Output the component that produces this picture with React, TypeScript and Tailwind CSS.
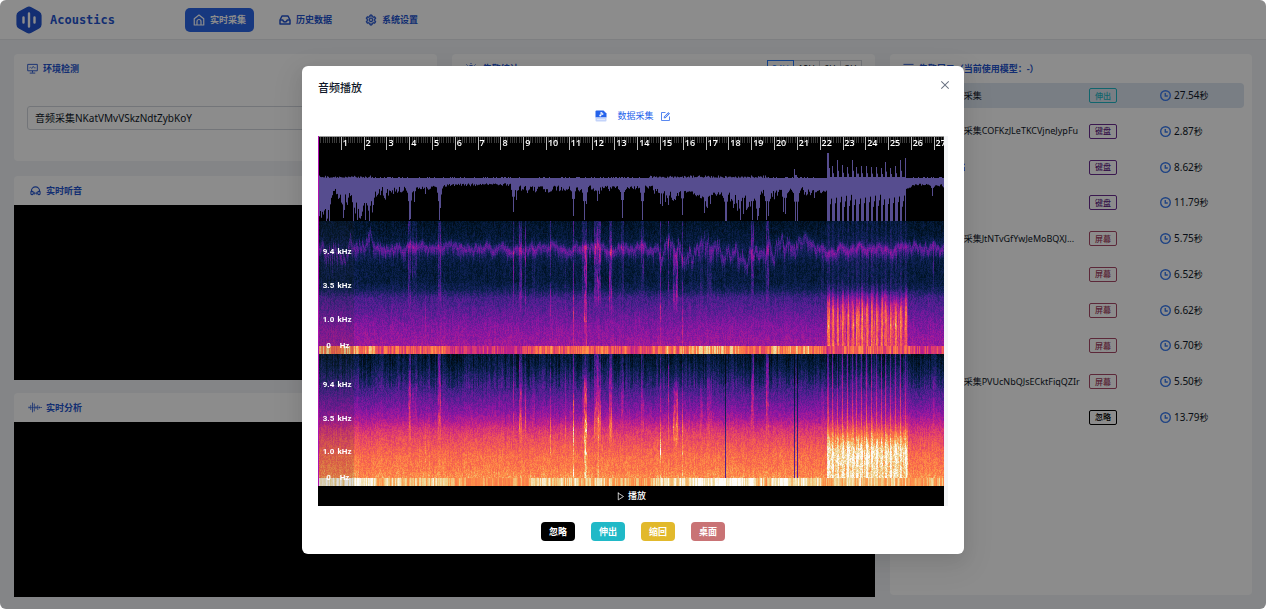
import { useEffect, useRef, useState } from "react";
import { AiOutlineClose, AiOutlineForm, AiOutlineSetting } from "react-icons/ai";
import { LuPlay } from "react-icons/lu";

type IconProps = { className?: string };

const LogoIcon = ({ className }: IconProps) => (
  <svg viewBox="0 0 26 28" className={className}>
    <path
      d="M10.6 1.2a5 5 0 0 1 4.8 0l7.8 4.2A4.6 4.6 0 0 1 25.6 9.500v9a4.600 4.600 0 0 1-2.400 4.100l-7.800 4.200a5 5 0 0 1-4.800 0l-7.800-4.200A4.600 4.600 0 0 1 .4 18.500v-9A4.600 4.600 0 0 1 2.800 5.400z"
      fill="#2354cf"
    />
    <path
      d="M7.500 11.500v5M13 7.500v13M18.500 11.500v5"
      stroke="#fff"
      strokeWidth="2.400"
      strokeLinecap="round"
    />
  </svg>
);

const HomeIcon = ({ className }: IconProps) => (
  <svg viewBox="0 0 24 24" className={className} fill="none" stroke="currentColor" strokeWidth="2.400" strokeLinejoin="round">
    <path d="M2.500 9.500 12 2l9.500 7.500V22h-19z" />
    <path d="M8 22v-7a4 4 0 0 1 8 0v7" />
  </svg>
);

const TrayIcon = ({ className }: IconProps) => (
  <svg viewBox="0 0 24 24" className={className} fill="none" stroke="currentColor" strokeWidth="3" strokeLinejoin="round">
    <path d="M6 4h12l4 8v8H2v-8z" />
    <path d="M2 12h5.500c.5 2.500 2 4 4.500 4s4-1.500 4.500-4H22" />
  </svg>
);

const GearIcon = ({ className }: IconProps) => <AiOutlineSetting className={className} strokeWidth={45} />;

const MonitorIcon = ({ className }: IconProps) => (
  <svg viewBox="0 0 24 24" className={className} fill="none" stroke="currentColor" strokeWidth="2">
    <path d="M1.500 3h21v14h-21zM12 17v4M6 22h12" />
    <path d="m5 11 3-1.500L11 12l2.500-5 2 3.500H19" strokeWidth="1.400" />
  </svg>
);

const HeadphoneIcon = ({ className }: IconProps) => (
  <svg viewBox="0 0 24 24" className={className} fill="none" stroke="currentColor" strokeWidth="2.400">
    <path d="M3 15v-2a9 9 0 0 1 18 0v2" />
    <rect x="2" y="14" width="5" height="7" rx="2" />
    <rect x="17" y="14" width="5" height="7" rx="2" />
    <path d="M10 15v6M14 15v6M7 18h10" strokeWidth="1.500" />
  </svg>
);

const WaveIcon = ({ className }: IconProps) => (
  <svg viewBox="0 0 28 22" className={className} fill="none" stroke="currentColor" strokeWidth="1.600" strokeLinecap="round">
    <path d="M2 10v2M5.500 7v8M9 2v18M12.500 4v14M16 9v4M19.500 7v8M23 10v2M26.500 11h.1" />
    <path d="M2 11h25" strokeWidth="1" />
  </svg>
);

const AlarmIcon = ({ className }: IconProps) => (
  <svg viewBox="0 0 24 24" className={className} fill="none" stroke="currentColor" strokeWidth="2">
    <path d="M6 19v-8a6 6 0 0 1 12 0v8z" fill="currentColor" fillOpacity="0.7" />
    <path d="M3 22h18M12 0v2M3 3l2 2M21 3l-2 2" />
  </svg>
);

const ListIcon = ({ className }: IconProps) => (
  <svg viewBox="0 0 24 24" className={className} fill="none" stroke="currentColor" strokeWidth="2">
    <path d="M1 3h22M1 12h6M1 21h22M11 9h12v7H11z" />
  </svg>
);

const ClockIcon = ({ className }: IconProps) => (
  <svg viewBox="0 0 24 24" className={className} fill="none" stroke="currentColor" strokeWidth="3">
    <circle cx="12" cy="12" r="10.500" />
    <path d="M11.500 6.500V13H17" />
  </svg>
);

const AudioFileIcon = ({ className }: IconProps) => (
  <svg viewBox="0 0 24 24" className={className}>
    <path d="M3 1h14l6 6v8H1V3a2 2 0 0 1 2-2z" fill="#2563eb" />
    <path d="M1 15h22v6a2 2 0 0 1-2 2H3a2 2 0 0 1-2-2z" fill="#c3d3fa" />
    <path d="M12 4v7M12 5l4 2v2l-4-1.500M5 19h2M9 19h2M13 19h2M17 19h2" stroke="#fff" strokeWidth="1.800" fill="none" />
    <circle cx="10.500" cy="11" r="2" fill="#fff" />
  </svg>
);

type Rgb = [number, number, number];

const colorStops: [number, Rgb][] = [
  [0, [2, 4, 8]],
  [0.1, [0, 22, 44]],
  [0.2, [16, 34, 88]],
  [0.32, [72, 32, 142]],
  [0.45, [138, 22, 162]],
  [0.57, [194, 34, 136]],
  [0.67, [228, 68, 102]],
  [0.77, [250, 108, 72]],
  [0.85, [253, 150, 74]],
  [0.92, [238, 210, 140]],
  [1, [253, 251, 248]],
];

const palette: Rgb[] = Array.from({ length: 256 }, (_, i) => {
  const v = i / 255;
  const n = Math.max(1, colorStops.findIndex(([stop]) => stop >= v));
  const [a, from] = colorStops[n - 1];
  const [b, to] = colorStops[n];
  const t = (v - a) / (b - a);
  return [0, 1, 2].map((c) => from[c] + (to[c] - from[c]) * t) as Rgb;
});

const createRandom = (seed: number) => () => {
  seed = (seed * 1664525 + 1013904223) >>> 0;
  return seed / 4294967296;
};

const interpolate = (points: number[][], x: number) => {
  const n = points.findIndex((p) => p[0] >= x);
  if (n === 0) return points[0][1];
  if (n < 0) return points[points.length - 1][1];
  const [x0, y0] = points[n - 1];
  const [x1, y1] = points[n];
  return y0 + ((y1 - y0) * (x - x0)) / (x1 - x0);
};

const DURATION = 27.45;
const WIDTH = 626;
const TAP_START = 509;
const TAP_END = 590;
const TAP_STEP = 4.83;

// x, half width, strength, first y, last y
const streaks = [
  [91, 1, 0.19, 0, 90], [96, 2, 0.1, 0, 75], [107, 0, 0.12, 60, 133], [121, 1, 0.18, 0, 90],
  [195, 0, 0.18, 0, 90], [202, 1, 0.2, 0, 95], [207, 0, 0.2, 0, 95], [215, 1, 0.08, 10, 80],
  [232, 0, 0.2, 0, 110], [247, 0, 0.14, 10, 100], [255, 0, 0.3, 0, 150], [267, 1, 0.24, 20, 150],
  [266, 2, 0.12, 0, 90], [279, 3, 0.24, 0, 90], [280, 0, 0.12, 50, 150], [292, 1, 0.22, 0, 95],
  [304, 1, 0.13, 0, 80], [324, 1, 0.14, 0, 80], [342, 0, 0.22, 0, 150], [350, 0, 0.22, 0, 90],
  [357, 2, 0.26, 25, 95], [364, 0, 0.2, 0, 150], [383, 1, 0.08, 20, 85], [391, 2, 0.09, 20, 85],
  [434, 1, 0.2, 0, 80], [449, 1, 0.19, 0, 85], [504, 1, 0.08, 20, 80], [615, 0, 0.13, 10, 80],
];

// x, depth below the axis
const dips = [
  [8, 43], [11, 43], [25, 40], [35, 44], [39, 42], [43, 38], [47, 42], [51, 44],
  [91, 42], [92, 41], [96, 24], [107, 16], [121, 42], [122, 30], [195, 34], [198, 22],
  [255, 38], [266, 42], [268, 26], [279, 23], [281, 16], [304, 40], [324, 42],
  [342, 26], [344, 28], [347, 24], [350, 27], [357, 22], [364, 37], [386, 35], [389, 30], [392, 26],
  [407, 43], [408, 43], [415, 30], [422, 42], [425, 36], [428, 32], [434, 42], [439, 42], [440, 38],
  [448, 42], [450, 38], [465, 34], [467, 36], [477, 43], [479, 43], [496, 20], [614, 18],
];

const depthLow = [[0, 28], [10, 20], [16, 8], [34, 10], [40, 24], [54, 20], [57, 7], [120, 7], [130, 5], [190, 5], [205, 7], [340, 7], [350, 12], [390, 14], [450, 10], [480, 8], [508, 12], [590, 10], [594, 5], [626, 6]];
const depthHigh = [[0, 43], [11, 43], [13, 20], [20, 32], [33, 38], [35, 44], [54, 44], [57, 26], [88, 15], [120, 13], [130, 9], [190, 9], [205, 17], [300, 14], [330, 12], [342, 24], [352, 26], [372, 14], [388, 34], [400, 18], [420, 40], [452, 30], [470, 16], [490, 20], [508, 14], [590, 12], [594, 8], [626, 10]];

const tapPhase = (x: number) => ((x - TAP_START) % TAP_STEP) / TAP_STEP;

const drawWaveform = (ctx: CanvasRenderingContext2D) => {
  const random = createRandom(7);
  const axis = 42;
  ctx.fillStyle = "#000";
  ctx.fillRect(0, 0, WIDTH, 85);

  for (let i = 0; i * 0.1 < DURATION; i++) {
    const x = Math.round((i * WIDTH) / DURATION / 10);
    const major = i % 10 === 0;
    ctx.fillStyle = major ? "#b9b9b9" : "#3b3b3b";
    ctx.fillRect(x, 0, 1, major ? 14 : 7);
  }
  ctx.fillStyle = "#9a9a9a";
  ctx.fillRect(0, 0, WIDTH, 1);

  ctx.fillStyle = "#564d8f";
  let depth = 30;
  for (let x = 0; x < WIDTH; x++) {
    const low = interpolate(depthLow, x);
    const high = interpolate(depthHigh, x);
    depth = depth * 0.3 + (low + (high - low) * Math.pow(random(), 1.3)) * 0.7;
    let down = depth;
    let up = random() < 0.2 ? 1 : 0;
    if (x < 55 || (x > 330 && x < 450)) up += random() * 1.6;
    dips.forEach(([dx, d]) => {
      if (Math.abs(dx - x) <= 2) down = Math.max(down, dx === x ? d : d * (0.75 - Math.abs(dx - x) * 0.2));
    });
    if (x >= TAP_START && x < TAP_END - 2) {
      const phase = tapPhase(x);
      const index = Math.floor((x - TAP_START) / TAP_STEP);
      const peak = [25, 12, 18, 13, 11, 18, 11, 12, 12, 11, 11, 10, 16, 10, 12, 18, 20][index] ?? 6;
      down = phase < 0.5 ? 43 : 43 - phase * 27;
      up = phase < 0.21 ? peak : phase < 0.42 ? peak * 0.4 : 1;
    }
    if (x === 476) up = 9;
    if (x === 477 || x === 478) up = 3;
    ctx.fillRect(x, axis - up, 1, Math.min(43, down) + up);
  }
};

type SpectrogramSettings = {
  seed: number;
  height: number;
  profile: number[][];
  band: boolean;
};

// level of the lowest frequency rows along time, 0 to 1
const floorLevel = [[0, 0.75], [54, 0.75], [60, 0.5], [124, 0.45], [140, 0.25], [150, 0.1], [205, 0.1], [215, 0.5], [300, 0.45], [325, 0.25], [342, 0.65], [370, 0.6], [385, 0.85], [430, 0.75], [444, 0.5], [448, 0.3], [455, 0.75], [503, 0.65], [506, 0.3], [525, 0.5], [590, 0.4], [596, 0.2], [626, 0.3]];

const drawSpectrogram = (
  ctx: CanvasRenderingContext2D,
  { seed, height, profile, band }: SpectrogramSettings
) => {
  const random = createRandom(seed);
  const image = ctx.createImageData(WIDTH, height);
  let center = 27;
  let bottom = 0.5;
  let grain = 0;

  for (let x = 0; x < WIDTH; x++) {
    const restless = x < 55 || (x > 340 && x < 490);
    const taps = x >= TAP_START && x < TAP_END;
    center += (27 - center) * 0.25 + (random() - 0.5) * (restless ? 16 : 6);
    bottom = bottom * 0.3 + random() * 0.7;
    grain = grain * 0.35 + (random() - 0.5) * 0.65;
    const tail = (restless ? 28 : 16) * random() * random();

    const active = streaks.filter(([sx, w]) => Math.abs(sx - x) <= w);
    const floor = Math.min(1, Math.max(0, interpolate(floorLevel, x) + (bottom - 0.5) * 0.8));
    const phase = tapPhase(x);
    const strike = taps ? (phase < 0.42 ? 0.8 + 0.2 * random() : 0.1 + 0.45 * random()) : 0;
    const tapTop = 70 + random() * 12;
    const dark = !band && (x === 407 || x === 476 || x === 479);
    let smear = 0;
    let wisp = 0;

    for (let y = 0; y < height; y++) {
      const noise = random() - 0.5;
      smear = smear * 0.5 + noise * 0.5;
      wisp = wisp * 0.9 + (random() - 0.5) * 0.4;
      let v = interpolate(profile, y);
      v += smear * 0.1 + noise * 0.05 + grain * (band ? 0.045 : 0.05);
      if (!band && y < 34) v += grain * 0.13;
      if (band) {
        const spread = y > center ? 4.5 + tail * 0.5 : 4;
        const d = (y - center) / spread;
        v += (restless ? 0.18 : 0.2) * Math.exp(-d * d) * (0.75 + random() * 0.45);
        v += 0.05 * Math.exp(-Math.pow((y - 29) / 11, 2));
      }
      active.forEach(([, , strength, top, end]) => {
        if (y < top || y > end) return;
        const fade = Math.min(1, (end - y) / 25) * (top === 0 ? 1 : Math.min(1, (y - top) / 15));
        v += strength * (0.8 + wisp) * fade * (y > 100 ? 0.45 : 0.9);
      });

      if (taps && y < height - 8) {
        const core = Math.exp(-Math.pow((y - 95) / 16, 2));
        if (band) {
          const body = 1 / (1 + Math.exp((tapTop - y) / 4));
          v += strike * 0.08 + body * (0.08 + strike * (0.13 + 0.13 * core) + wisp * 0.12);
        } else {
          const body = 1 / (1 + Math.exp((tapTop - 2 - y) / 5));
          v += (phase < 0.21 ? 0.2 : 0.02) * (1 - body) + body * (0.06 + 0.1 * strike + 0.09 * core + wisp * 0.08);
        }
      }
      if (y >= height - 8) {
        v = band ? 0.55 + floor * 0.38 + smear * 0.06 : 0.8 + floor * 0.23 + smear * 0.03;
      }
      if (dark) v = y < 30 ? 0.04 : y < height - 8 ? v * 0.42 : v;

      const color = palette[Math.round(Math.min(1, Math.max(0.02, v)) * 255)];
      const offset = (y * WIDTH + x) * 4;
      image.data[offset] = color[0];
      image.data[offset + 1] = color[1];
      image.data[offset + 2] = color[2];
      image.data[offset + 3] = 255;
    }
  }
  ctx.putImageData(image, 0, 0);
};

const softSpectrum: SpectrogramSettings = {
  seed: 21,
  height: 133,
  band: true,
  profile: [[0, 0.09], [10, 0.11], [40, 0.13], [60, 0.14], [68, 0.19], [76, 0.3], [90, 0.36], [105, 0.43], [122, 0.48], [133, 0.52]],
};

const loudSpectrum: SpectrogramSettings = {
  seed: 90,
  height: 132,
  band: false,
  profile: [[0, 0.1], [12, 0.15], [25, 0.24], [40, 0.34], [55, 0.43], [65, 0.51], [74, 0.61], [82, 0.67], [92, 0.72], [102, 0.77], [115, 0.8], [124, 0.84], [132, 0.86]],
};

type PlotProps = {
  height: number;
  label: string;
  draw: (ctx: CanvasRenderingContext2D) => void;
};

const Plot = ({ height, label, draw }: PlotProps) => {
  const ref = useRef<HTMLCanvasElement>(null);

  useEffect(() => {
    const ctx = ref.current?.getContext("2d");
    if (ctx) draw(ctx);
  }, [draw]);

  return <canvas ref={ref} width={WIDTH} height={height} role="img" aria-label={label} className="block w-full" />;
};

const drawSoft = (ctx: CanvasRenderingContext2D) => drawSpectrogram(ctx, softSpectrum);
const drawLoud = (ctx: CanvasRenderingContext2D) => drawSpectrogram(ctx, loudSpectrum);

const FrequencyScale = () => (
  <div className="absolute inset-y-0 left-0 flex w-9 flex-col bg-[#2a2a30]/15 pt-[14px] pl-1 font-[Roboto,sans-serif] text-[8px] leading-none font-bold text-white">
    {[["9.4", "kHz"], ["3.5", "kHz"], ["1.0", "kHz"]].map(([value, unit]) => (
      <div key={value} className="flex h-[34px] items-center gap-[2px]">
        <span className="w-[13px] text-center">{value}</span>
        <span className="w-[15px] text-center">{unit}</span>
      </div>
    ))}
    <div className="flex h-[17px] items-end gap-[2px] pb-1">
      <span className="w-[13px] text-center">0</span>
      <span className="w-[15px] text-center">Hz</span>
    </div>
  </div>
);

const TimeRuler = () => (
  <div className="absolute inset-x-0 top-0 flex overflow-hidden font-['Open_Sans',sans-serif] text-[9px] leading-[14px] font-semibold text-white">
    {Array.from({ length: 28 }, (_, second) => (
      <span
        key={second}
        className="shrink-0 pl-[2px]"
        style={{ width: `${100 / DURATION}%` }}
      >
        {second > 0 && second}
      </span>
    ))}
  </div>
);

const navItems = [
  { label: "实时采集", Icon: HomeIcon },
  { label: "历史数据", Icon: TrayIcon },
  { label: "系统设置", Icon: GearIcon },
];

const tagStyles = {
  伸出: "border-[#1fb8c6] text-[#1fb8c6]",
  键盘: "border-[#6a2c91] text-[#5f2385]",
  屏幕: "border-[#a84a68] text-[#a03c5e]",
  忽略: "border-black text-black",
};

type Alarm = {
  name: string;
  tag: keyof typeof tagStyles;
  seconds: string;
  editable?: boolean;
};

const alarms: Alarm[] = [
  { name: "数据采集", tag: "伸出", seconds: "27.54" },
  { name: "音频采集COFKzJLeTKCVjneJypFu", tag: "键盘", seconds: "2.87" },
  { name: "1", tag: "键盘", seconds: "8.62", editable: true },
  { name: "2", tag: "键盘", seconds: "11.79" },
  { name: "音频采集JtNTvGfYwJeMoBQXJ...", tag: "屏幕", seconds: "5.75" },
  { name: "3", tag: "屏幕", seconds: "6.52" },
  { name: "4", tag: "屏幕", seconds: "6.62" },
  { name: "5", tag: "屏幕", seconds: "6.70" },
  { name: "音频采集PVUcNbQJsECktFiqQZIr", tag: "屏幕", seconds: "5.50" },
  { name: "6", tag: "忽略", seconds: "13.79" },
];

const actions = [
  { label: "忽略", className: "bg-black" },
  { label: "伸出", className: "bg-[#20b9c7]" },
  { label: "缩回", className: "bg-[#e2b92c]" },
  { label: "桌面", className: "bg-[#c97375]" },
];

const Header = () => (
  <header className="flex h-10 items-center border-b border-gray-200 bg-white px-4">
    <LogoIcon className="h-7 w-[26px]" />
    <span className="ml-2 w-[135px] font-['DejaVu_Sans_Mono',monospace] text-[12px] font-bold text-[#2354cf]">
      Acoustics
    </span>
    <nav className="flex gap-[17px]">
      {navItems.map(({ label, Icon }, i) => (
        <a
          key={label}
          href="#"
          className={
            i === 0
              ? "flex h-6 items-center gap-[5px] rounded-[5px] bg-[#2b66e8] px-2 font-bold text-white"
              : "flex h-6 items-center gap-[5px] rounded-[5px] px-2 font-bold text-[#2354cf]"
          }
        >
          <Icon className="size-3" />
          {label}
        </a>
      ))}
    </nav>
  </header>
);

const AlarmList = () => (
  <section className="h-[541px] rounded bg-white px-2">
    <h2 className="flex h-[29px] items-center gap-[5px] pl-[5px] font-bold text-[#2354cf]">
      <ListIcon className="size-[11px]" />
      告警展示（当前使用模型：-）
    </h2>
    <ul className="flex h-[347px] flex-col justify-between">
      {alarms.map(({ name, tag, seconds, editable }, i) => (
        <li
          key={name}
          className={
            i === 0
              ? "flex h-[25px] items-center rounded bg-[#dde5f0] pl-12"
              : "flex h-[25px] items-center pl-12"
          }
        >
          <span className="flex min-w-0 flex-1 items-center gap-[5px] whitespace-nowrap">
            {name}
            {editable && <AiOutlineForm className="size-[10px] text-blue-600" />}
          </span>
          <span className="w-[71px] shrink-0">
            <span
              className={`flex h-[15px] w-7 items-center justify-center rounded-[2px] border text-[8px] font-medium ${tagStyles[tag]}`}
            >
              {tag}
            </span>
          </span>
          <span className="flex w-[84px] shrink-0 items-center gap-[3px]">
            <ClockIcon className="size-[11px] text-[#3b7cf0]" />
            <span>
              <span className="text-[10px]">{seconds}</span>秒
            </span>
          </span>
        </li>
      ))}
    </ul>
  </section>
);

const PlayerDialog = ({ onClose }: { onClose: () => void }) => {
  const [playing, setPlaying] = useState(false);

  return (
    <div className="absolute inset-0 flex items-start justify-center bg-black/45 pt-[66px]">
      <div
        role="dialog"
        aria-label="音频播放"
        className="w-[662px] max-w-full rounded-md bg-white px-4 pt-[14px] pb-[13px] shadow-[0_6px_16px_rgba(0,0,0,0.08),0_9px_28px_8px_rgba(0,0,0,0.05)]"
      >
        <div className="flex h-4 items-center justify-between">
          <h2 className="text-[11px] font-medium text-gray-900">音频播放</h2>
          <button type="button" aria-label="关闭" className="-mr-[3px] pb-[6px] text-gray-500" onClick={onClose}>
            <AiOutlineClose className="size-3" />
          </button>
        </div>

        <div className="mt-2 flex h-6 items-center justify-center text-[#2563eb]">
          <AudioFileIcon className="mr-[10px] size-3" />
          数据采集
          <button type="button" aria-label="编辑" className="ml-[6px]">
            <AiOutlineForm className="size-[11px]" />
          </button>
        </div>

        <div className="mt-2 bg-gray-100 pr-1">
          <div className="relative">
            <div className="relative">
              <Plot height={85} label="波形" draw={drawWaveform} />
              <TimeRuler />
            </div>
            <div className="relative">
              <Plot height={133} label="频谱 1" draw={drawSoft} />
              <FrequencyScale />
            </div>
            <div className="relative">
              <Plot height={132} label="频谱 2" draw={drawLoud} />
              <FrequencyScale />
            </div>
            <div className="absolute inset-y-0 left-0 w-px bg-[#b010b0]" />
          </div>
          <button
            type="button"
            className="flex h-5 w-full items-center justify-center gap-[3px] bg-black font-medium text-white"
            onClick={() => setPlaying(!playing)}
          >
            <LuPlay className="size-[9px]" />
            {playing ? "暂停" : "播放"}
          </button>
        </div>

        <div className="mt-4 flex justify-center gap-4">
          {actions.map(({ label, className }) => (
            <button
              key={label}
              type="button"
              className={`h-[19px] w-[34px] rounded font-bold text-white ${className}`}
            >
              {label}
            </button>
          ))}
        </div>
      </div>
    </div>
  );
};

export default function App() {
  const [open, setOpen] = useState(true);
  const [range, setRange] = useState("24H");

  return (
    <div className="min-h-screen bg-white pr-px pb-px font-['Noto_Sans','Noto_Sans_CJK_SC',sans-serif] text-[9px] leading-[14px] text-gray-900">
      <div className="relative min-h-[609px] overflow-hidden rounded-md bg-[#f1f3f6]">
        <Header />

        <main className="grid grid-cols-[19fr_8fr] gap-[15px] px-[14px] pt-[14px] pb-3">
          <div className="min-w-0">
            <div className="grid grid-cols-2 gap-[15px]">
              <section className="h-[107px] rounded bg-white px-[13px]">
                <h2 className="flex h-[29px] items-center gap-[5px] font-bold text-[#2354cf]">
                  <MonitorIcon className="size-[11px]" />
                  环境检测
                </h2>
                <select
                  aria-label="音频采集"
                  className="mt-[23px] h-6 w-full appearance-none rounded-[3px] border border-gray-300 bg-white px-[7px] text-[10px]"
                >
                  <option>音频采集NKatVMvVSkzNdtZybKoY</option>
                </select>
              </section>

              <section className="h-[107px] rounded bg-white px-[13px]">
                <div className="flex h-[29px] items-center justify-between">
                  <h2 className="flex items-center gap-[6px] font-bold text-[#2354cf]">
                    <AlarmIcon className="size-3" />
                    告警统计
                  </h2>
                  <div className="flex">
                    {["24H", "12H", "6H", "3H"].map((item) => (
                      <button
                        key={item}
                        type="button"
                        className={
                          item === range
                            ? "h-[17px] border border-blue-500 px-1 text-blue-500"
                            : "h-[17px] border border-l-0 border-gray-300 px-1"
                        }
                        onClick={() => setRange(item)}
                      >
                        {item}
                      </button>
                    ))}
                  </div>
                </div>
              </section>
            </div>

            <section className="mt-[15px] rounded-t bg-white">
              <h2 className="flex h-[29px] items-center gap-[5px] pl-4 font-bold text-[#2354cf]">
                <HeadphoneIcon className="size-[11px]" />
                实时听音
              </h2>
              <div className="h-[175px] bg-black" />
            </section>

            <section className="mt-[13px] rounded-t bg-white">
              <h2 className="flex h-[29px] items-center gap-1 pl-[14px] font-bold text-[#2354cf]">
                <WaveIcon className="h-[11px] w-[14px]" />
                实时分析
              </h2>
              <div className="h-[175px] bg-black" />
            </section>
          </div>

          <AlarmList />
        </main>

        {open && <PlayerDialog onClose={() => setOpen(false)} />}
      </div>
    </div>
  );
}
